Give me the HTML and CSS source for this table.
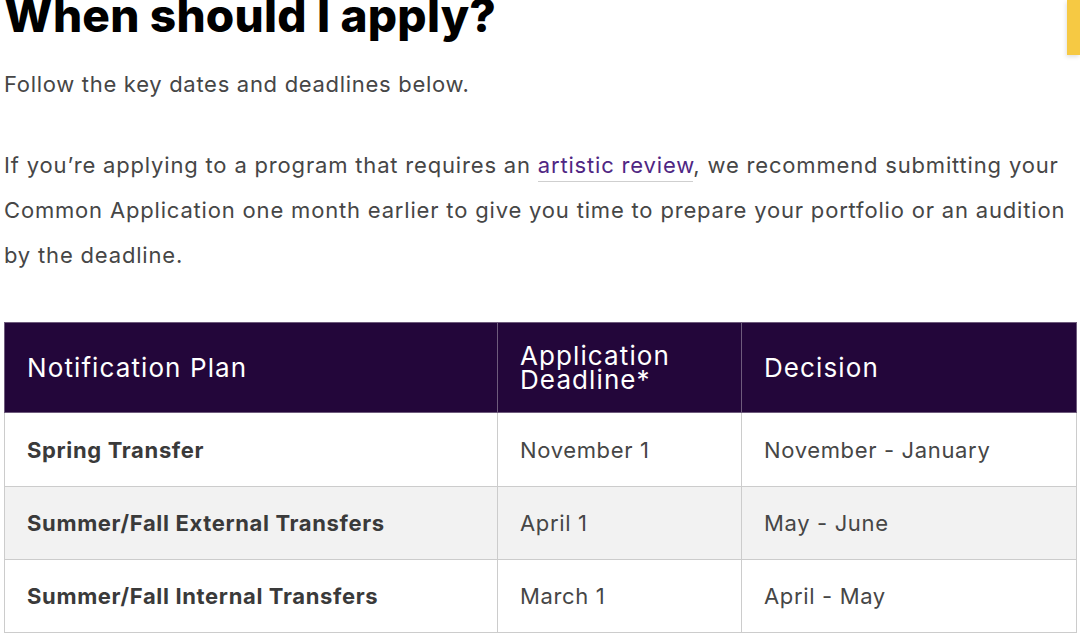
FILE: index.html
```html
<!DOCTYPE html>
<html lang="en">
<head>
<meta charset="utf-8">
<link rel="stylesheet" href="styles.css">
</head>
<body>
<div class="tab-flag"></div>
<main class="content">
  <h1 class="title">When should I apply?</h1>
  <p class="lead">Follow the key dates and deadlines below.</p>
  <p class="body">If you’re applying to a program that requires an <a class="link" href="#">artistic review</a>, we recommend submitting your Common Application one month earlier to give you time to prepare your portfolio or an audition by the deadline.</p>
  <table class="dates">
    <colgroup>
      <col class="c1"><col class="c2"><col class="c3">
    </colgroup>
    <thead>
      <tr>
        <th>Notification Plan</th>
        <th class="two">Application<br>Deadline*</th>
        <th>Decision</th>
      </tr>
    </thead>
    <tbody>
      <tr class="r1">
        <td class="plan">Spring Transfer</td>
        <td>November 1</td>
        <td>November - January</td>
      </tr>
      <tr class="alt">
        <td class="plan">Summer/Fall External Transfers</td>
        <td>April 1</td>
        <td>May - June</td>
      </tr>
      <tr>
        <td class="plan">Summer/Fall Internal Transfers</td>
        <td>March 1</td>
        <td>April - May</td>
      </tr>
    </tbody>
  </table>
</main>
</body>
</html>
```
FILE: styles.css
```css
html, body {
  margin: 0;
  padding: 0;
  background: #ffffff;
  overflow: hidden;
}
body {
  font-family: "Inter", "Liberation Sans", sans-serif;
  color: #464646;
}
.content {
  padding: 0 4px;
}
.tab-flag {
  position: absolute;
  top: 0;
  right: 0;
  width: 13px;
  height: 55px;
  background: #f6c943;
  box-shadow: -1px 2px 4px rgba(0,0,0,0.12);
}
.title {
  margin: -13px 0 0;
  font-size: 46px;
  line-height: 56px;
  font-weight: 800;
  color: #000000;
  letter-spacing: 0.2px;
}
.lead {
  margin: 25px 0 0;
  font-size: 22px;
  line-height: 32px;
  letter-spacing: 0.7px;
}
.body {
  margin: 43px 0 0;
  font-size: 22px;
  line-height: 45px;
  letter-spacing: 0.82px;
}
.link {
  color: #4f2683;
  text-decoration: none;
  border-bottom: 1px solid #cfcfcf;
  padding-bottom: 3px;
}
.dates {
  margin-top: 44px;
  width: 1072px;
  border-collapse: collapse;
  table-layout: fixed;
}
.c1 { width: 493px; }
.c2 { width: 244px; }
.c3 { width: 335px; }
.dates th {
  background: #23063a;
  color: #ffffff;
  font-weight: 400;
  font-size: 26px;
  text-align: left;
  height: 90px;
  padding: 0 22px;
  box-sizing: border-box;
  border: 1px solid #6e5b7c;
  letter-spacing: 1.1px;
}
.dates th.two {
  line-height: 0.9;
}
.dates td {
  height: 73px;
  padding: 0 22px;
  box-sizing: border-box;
  border: 1px solid #cccccc;
  font-size: 22px;
  color: #464646;
  letter-spacing: 0.65px;
}
.dates tr.r1 td {
  height: 74px;
}
.dates td.plan {
  font-weight: 700;
  color: #3a3a3a;
}
.dates tr.alt td {
  background: #f2f2f2;
}
```
